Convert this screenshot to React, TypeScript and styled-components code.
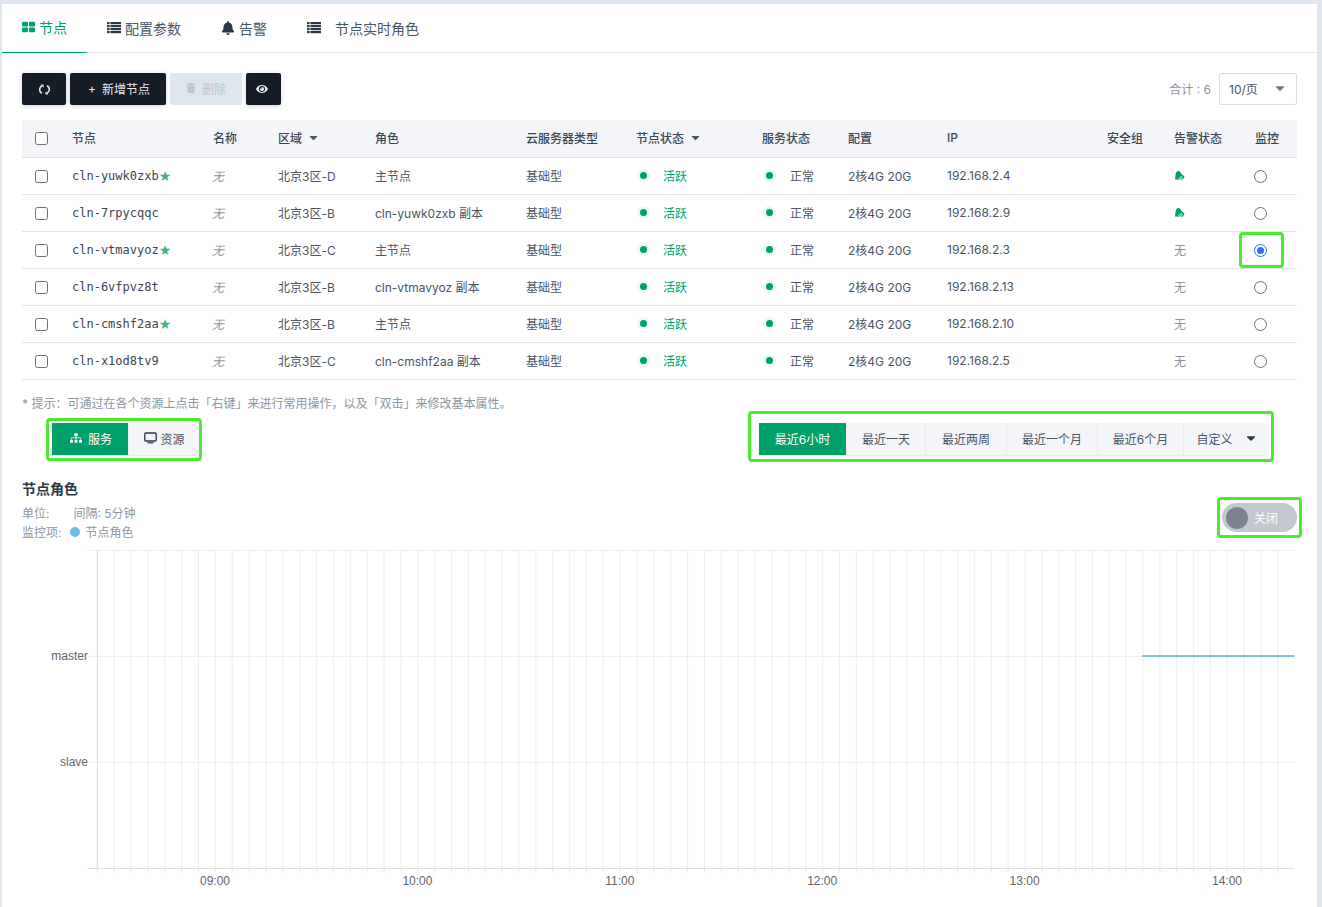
import React from "react";
import styled, { createGlobalStyle } from "styled-components";
import { FaBell, FaEye, FaSitemap, FaTrash, FaCaretDown } from "react-icons/fa";

const GREEN = "#00a06a";
const DARK = "#161d26";

const GlobalStyle = createGlobalStyle`
    html, body {
        margin: 0;
        padding: 0;
        height: 100%;
        background: #dfe6ee;
        overflow: hidden;
    }
    body {
        font-family: Inter, "Noto Sans CJK SC", sans-serif;
        font-size: 12px;
        color: #4a5664;
    }
    * {
        box-sizing: border-box;
    }
`;

const columns = "50px 141px 65px 97px 151px 110px 126px 86px 99px 160px 67px 81px 42px";

const nodes = [
    { id: "cln-yuwk0zxb", star: true, zone: "北京3区-D", role: "主节点", ip: "192.168.2.4", alarm: true, on: false },
    { id: "cln-7rpycqqc", star: false, zone: "北京3区-B", role: "cln-yuwk0zxb 副本", ip: "192.168.2.9", alarm: true, on: false },
    { id: "cln-vtmavyoz", star: true, zone: "北京3区-C", role: "主节点", ip: "192.168.2.3", alarm: false, on: true },
    { id: "cln-6vfpvz8t", star: false, zone: "北京3区-B", role: "cln-vtmavyoz 副本", ip: "192.168.2.13", alarm: false, on: false },
    { id: "cln-cmshf2aa", star: true, zone: "北京3区-B", role: "主节点", ip: "192.168.2.10", alarm: false, on: false },
    { id: "cln-x1od8tv9", star: false, zone: "北京3区-C", role: "cln-cmshf2aa 副本", ip: "192.168.2.5", alarm: false, on: false },
];

const Page = styled.div`
    height: 907px;
    padding: 4px 5px 0 2px;
`;

const Panel = styled.div`
    height: 100%;
    background: #fff;
    overflow: hidden;
`;

const Tabs = styled.div`
    display: flex;
    height: 49px;
    border-bottom: 1px solid #dfe6ee;
`;

const Tab = styled.div<{ $active?: boolean }>`
    display: flex;
    align-items: center;
    gap: 4px;
    height: 49px;
    padding: 0 20px 2px;
    font-size: 14px;
    color: ${(p) => (p.$active ? GREEN : "#4a5664")};
    border-bottom: ${(p) => (p.$active ? `1px solid ${GREEN}` : "none")};
    svg {
        color: ${(p) => (p.$active ? GREEN : "#2c3846")};
    }
`;

const TabGap = styled.span`
    width: 6px;
`;

const Body = styled.div`
    padding: 20px 20px 0;
`;

const Toolbar = styled.div`
    display: flex;
    align-items: center;
    gap: 4px;
    height: 32px;
`;

const ToolButton = styled.button<{ $width: number; $disabled?: boolean }>`
    display: flex;
    align-items: center;
    justify-content: center;
    gap: 6px;
    width: ${(p) => p.$width}px;
    height: 32px;
    padding: 0 0 2px;
    border: none;
    border-radius: 2px;
    font: inherit;
    color: ${(p) => (p.$disabled ? "#bdc6d0" : "#e8ebee")};
    background: ${(p) => (p.$disabled ? "#dfe6ee" : DARK)};
    box-shadow: ${(p) => (p.$disabled ? "none" : "0 1px 4px rgba(22, 29, 38, 0.2)")};
`;

const AddButton = styled(ToolButton)`
    padding: 0 0 2px 2px;
`;

const EyeButton = styled(ToolButton)`
    padding: 0 3px 0 0;
`;

const RefreshButton = styled(ToolButton)`
    padding: 0;
`;

const Total = styled.div`
    display: flex;
    align-items: center;
    gap: 8px;
    margin-left: auto;
    color: #8c96a1;
`;

const TotalLabel = styled.span`
    margin-top: -2px;
`;

const PageSize = styled.div`
    display: flex;
    align-items: center;
    justify-content: space-between;
    width: 78px;
    height: 32px;
    padding: 0 9px 2px 9px;
    border: 1px solid #d5dfe8;
    border-radius: 2px;
    color: #4a5664;
    svg {
        color: #6d7783;
    }
`;

const Table = styled.div`
    margin-top: 15px;
`;

const Row = styled.div<{ $head?: boolean }>`
    display: grid;
    grid-template-columns: ${columns};
    align-items: center;
    height: ${(p) => (p.$head ? 38 : 37)}px;
    padding-bottom: ${(p) => (p.$head ? 3 : 2)}px;
    border-bottom: 1px solid #dfe6ee;
    background: ${(p) => (p.$head ? "#f3f5f9" : "#fff")};
    font-weight: ${(p) => (p.$head ? 500 : 400)};
    color: ${(p) => (p.$head ? "#3a4654" : "#4a5664")};
`;

const CheckCell = styled.div`
    display: flex;
    margin-top: 3px;
    padding-left: 13px;
`;

const Check = styled.span`
    width: 13px;
    height: 13px;
    border: 1px solid #6e6e6e;
    border-radius: 2.5px;
    background: #fff;
`;

const HeadCell = styled.div`
    display: flex;
    align-items: center;
    gap: 5px;
    svg {
        color: #4a5664;
    }
`;

const NodeCell = styled.div`
    display: flex;
    align-items: center;
    height: 16px;
    margin-top: 2px;
`;

const NodeId = styled.span`
    font-family: "DejaVu Sans Mono", monospace;
    font-size: 12px;
    color: #3a4654;
`;

const Star = styled.span`
    color: #3fb27f;
    font-size: 14px;
    line-height: 16px;
    font-family: "DejaVu Sans", sans-serif;
`;

const Muted = styled.span`
    color: #8c96a1;
`;

const Empty = styled(Muted)`
    font-style: italic;
    margin-left: -1px;
`;

const Status = styled.div<{ $green?: boolean }>`
    display: flex;
    align-items: center;
    gap: ${(p) => (p.$green ? 16 : 17)}px;
    padding-left: 4px;
    color: ${(p) => (p.$green ? GREEN : "#4a5664")};
    &::before {
        content: "";
        width: 7px;
        height: 7px;
        border-radius: 50%;
        background: ${GREEN};
        box-shadow: 0 0 0 3px rgba(0, 160, 106, 0.08);
    }
`;

const RadioCell = styled.div`
    margin-top: 3px;
`;

const AlarmCell = styled.div`
    display: flex;
    margin-top: 1px;
`;

const Radio = styled.span<{ $on: boolean }>`
    position: relative;
    display: block;
    width: 13px;
    height: 13px;
    margin-left: -1px;
    border-radius: 50%;
    border: 1px solid ${(p) => (p.$on ? "#2f6fed" : "#6e6e6e")};
    background: #fff;
    &::before {
        content: "";
        display: ${(p) => (p.$on ? "block" : "none")};
        position: absolute;
        inset: 2px;
        border-radius: 50%;
        background: #2f6fed;
    }
`;

/* the green marks drawn over the shot */
const Marked = styled.div<{ $inset: string }>`
    position: relative;
    &::after {
        content: "";
        position: absolute;
        inset: ${(p) => p.$inset};
        border: 3px solid #4bea2e;
        border-radius: 4px;
        pointer-events: none;
    }
`;

const MarkedRadio = styled(Marked)`
    width: 13px;
`;

const MarkedSwitch = styled(Marked)`
    margin-top: 23px;
`;

const Tip = styled.div`
    margin-top: 16px;
    line-height: 15px;
    color: #8c96a1;
`;

const Controls = styled.div`
    display: flex;
    justify-content: space-between;
    margin-top: 12px;
    padding: 0 29px 0 30px;
`;

const Segments = styled.div`
    display: flex;
    background: #f3f5f9;
    border-radius: 2px;
    box-shadow: 0 1px 2px rgba(22, 29, 38, 0.12);
`;

const Segment = styled.div<{ $active?: boolean; $width: number; $gap?: number; $shift?: number }>`
    display: flex;
    align-items: center;
    justify-content: center;
    gap: ${(p) => p.$gap ?? 4}px;
    width: ${(p) => p.$width}px;
    height: 32px;
    padding: 0 0 2px ${(p) => p.$shift ?? 0}px;
    color: ${(p) => (p.$active ? "#fff" : "#4a5664")};
    background: ${(p) => (p.$active ? GREEN : "transparent")};
    & + & {
        border-left: 1px solid ${(p) => (p.$active ? GREEN : "#e8ebf0")};
    }
`;

const CustomSegment = styled(Segment)`
    gap: 11px;
    padding-left: 2px;
    svg {
        color: #2c3846;
    }
`;

const ChartHead = styled.div`
    display: flex;
    justify-content: space-between;
    align-items: flex-start;
    margin-top: 25px;
`;

const ChartTitle = styled.div`
    font-size: 14px;
    font-weight: 600;
    line-height: 18px;
    color: #2c3846;
`;

const Meta = styled.div`
    display: flex;
    align-items: center;
    gap: 8px;
    height: 19px;
    color: #8c96a1;
`;

const MetaHead = styled(Meta)`
    margin-top: 5px;
    gap: 24px;
`;

const MetaName = styled.span`
    margin-left: -3px;
`;

const Dot = styled.span`
    width: 10px;
    height: 10px;
    margin-left: 1px;
    border-radius: 50%;
    background: #74b8ec;
`;

const Switch = styled.div`
    display: flex;
    align-items: center;
    gap: 6px;
    width: 75px;
    height: 29px;
    padding-left: 4px;
    border-radius: 15px;
    background: #c2c8ce;
    color: #fff;
`;

const Knob = styled.span`
    width: 22px;
    height: 22px;
    border-radius: 50%;
    background: #7b838e;
`;

const ChartSvg = styled.svg`
    display: block;
    margin-top: 9px;
    font-family: "Liberation Sans", sans-serif;
    font-size: 12px;
`;

const NodesIcon = () => (
    <svg width="13" height="12" viewBox="0 0 13.4 12" fill="currentColor">
        <rect x="0" y="0.5" width="6.2" height="5" rx="1" />
        <rect x="7.2" y="0.5" width="6.2" height="5" rx="1" />
        <rect x="0" y="6.5" width="6.2" height="5" rx="1" />
        <rect x="7.2" y="6.5" width="6.2" height="5" rx="1" />
    </svg>
);

const ListIcon = () => (
    <svg width="14" height="12" viewBox="0 0 14 12" fill="currentColor">
        {[0, 3, 6, 9].map((y) => (
            <React.Fragment key={y}>
                <rect x="0" y={y} width="2.6" height="2.2" />
                <rect x="3.4" y={y} width="10.6" height="2.2" />
            </React.Fragment>
        ))}
    </svg>
);

const RefreshIcon = () => (
    <svg width="11" height="11" viewBox="0 0 11 11" fill="none" stroke="currentColor" strokeWidth="1.5">
        <path d="M3 9.2A4 4 0 0 1 3 1.9" />
        <path d="M8 1.8A4 4 0 0 1 8 9.1" />
        <path d="M1.9 1.2H4V3.3" strokeWidth="1.2" />
        <path d="M9.1 9.8H7V7.7" strokeWidth="1.2" />
    </svg>
);

const MonitorIcon = () => (
    <svg width="13" height="12" viewBox="0 0 13 12" fill="none" stroke="#2c3846">
        <rect x="0.8" y="1" width="11.4" height="8" rx="1" strokeWidth="1.3" />
        <path d="M3.5 10.8h6" strokeWidth="1.2" />
    </svg>
);

const AlarmIcon = () => (
    <svg width="11" height="11" viewBox="0 0 11 11">
        <path d="M1 9.6 1.6 4.2C1.9 2 3.4 0.8 4.6 0.9 6 1 6.6 2.2 7 3.6L10.6 6.8 8.6 9.8Z" fill={GREEN} />
        <path d="M4.4 8.8 8 6.2M5.4 10 8.6 8" stroke="#fff" strokeWidth="0.9" />
    </svg>
);

// 1322 wide page, the panel content starts at x=22
const hourStep = 202.4 / 12;
const xTicks = Array.from({ length: 72 }, (_, i) => 75.3 + i * hourStep).filter((x) => x <= 1272.5);
const timeLabels = ["09:00", "10:00", "11:00", "12:00", "13:00", "14:00"];

const Chart = () => (
    <ChartSvg width="1275" height="345" viewBox="0 0 1275 345">
        {xTicks.map((x) => (
            <line key={x} x1={x} x2={x} y1={0.5} y2={323} stroke="#eeeeee" />
        ))}
        {[0.5, 106.5, 212.5].map((y) => (
            <line key={y} x1={65} x2={1272.5} y1={y} y2={y} stroke="#eeeeee" />
        ))}
        <line x1={75.3} x2={75.3} y1={0.5} y2={318} stroke="#e0e0e0" />
        <line x1={65} x2={1272.5} y1={318.5} y2={318.5} stroke="#e0e0e0" />
        <line x1={1120} x2={1272.5} y1={106} y2={106} stroke="#7dbfe5" strokeWidth="2" />
        <text x="66" y="110" textAnchor="end" fill="#666">master</text>
        <text x="66" y="216" textAnchor="end" fill="#666">slave</text>
        {timeLabels.map((t, i) => (
            <text key={t} x={193 + i * 202.4} y="335" textAnchor="middle" fill="#666">{t}</text>
        ))}
    </ChartSvg>
);

export default function App() {
    return (
        <>
            <GlobalStyle />
            <Page>
                <Panel>
                    <Tabs>
                        <Tab $active><NodesIcon />节点</Tab>
                        <Tab><ListIcon />配置参数</Tab>
                        <Tab><FaBell size={14} />告警</Tab>
                        <Tab><ListIcon /><TabGap />节点实时角色</Tab>
                    </Tabs>
                    <Body>
                        <Toolbar>
                            <RefreshButton $width={44}><RefreshIcon /></RefreshButton>
                            <AddButton $width={96}><span>+</span><span>新增节点</span></AddButton>
                            <ToolButton $width={72} $disabled><FaTrash size={10} />删除</ToolButton>
                            <EyeButton $width={35}><FaEye size={12} /></EyeButton>
                            <Total>
                                <TotalLabel>合计 : 6</TotalLabel>
                                <PageSize>10/页<FaCaretDown size={14} /></PageSize>
                            </Total>
                        </Toolbar>
                        <Table>
                            <Row $head>
                                <CheckCell><Check /></CheckCell>
                                <HeadCell>节点</HeadCell>
                                <HeadCell>名称</HeadCell>
                                <HeadCell>区域<FaCaretDown size={13} /></HeadCell>
                                <HeadCell>角色</HeadCell>
                                <HeadCell>云服务器类型</HeadCell>
                                <HeadCell>节点状态<FaCaretDown size={13} /></HeadCell>
                                <HeadCell>服务状态</HeadCell>
                                <HeadCell>配置</HeadCell>
                                <HeadCell>IP</HeadCell>
                                <HeadCell>安全组</HeadCell>
                                <HeadCell>告警状态</HeadCell>
                                <HeadCell>监控</HeadCell>
                            </Row>
                            {nodes.map((n) => (
                                <Row key={n.id}>
                                    <CheckCell><Check /></CheckCell>
                                    <NodeCell>
                                        <NodeId>{n.id}</NodeId>
                                        {n.star && <Star>★</Star>}
                                    </NodeCell>
                                    <div><Empty>无</Empty></div>
                                    <div>{n.zone}</div>
                                    <div>{n.role}</div>
                                    <div>基础型</div>
                                    <Status $green>活跃</Status>
                                    <Status>正常</Status>
                                    <div>2核4G 20G</div>
                                    <div>{n.ip}</div>
                                    <div />
                                    <AlarmCell>{n.alarm ? <AlarmIcon /> : <Muted>无</Muted>}</AlarmCell>
                                    <RadioCell>
                                        {n.on ? (
                                            <MarkedRadio $inset="-12px -16px -11px -16px">
                                                <Radio $on />
                                            </MarkedRadio>
                                        ) : (
                                            <Radio $on={false} />
                                        )}
                                    </RadioCell>
                                </Row>
                            ))}
                        </Table>
                        <Tip>* 提示：可通过在各个资源上点击「右键」来进行常用操作，以及「双击」来修改基本属性。</Tip>
                        <Controls>
                            <Marked $inset="-5px -2px -6px -6px">
                                <Segments>
                                    <Segment $active $width={76} $gap={6} $shift={2}><FaSitemap size={12} />服务</Segment>
                                    <Segment $width={72} $gap={3}><MonitorIcon />资源</Segment>
                                </Segments>
                            </Marked>
                            <Marked $inset="-12px -6px -7px -11px">
                                <Segments>
                                    <Segment $active $width={87}>最近6小时</Segment>
                                    <Segment $width={79}>最近一天</Segment>
                                    <Segment $width={81}>最近两周</Segment>
                                    <Segment $width={91}>最近一个月</Segment>
                                    <Segment $width={86}>最近6个月</Segment>
                                    <CustomSegment $width={85}>自定义<FaCaretDown size={14} /></CustomSegment>
                                </Segments>
                            </Marked>
                        </Controls>
                        <ChartHead>
                            <div>
                                <ChartTitle>节点角色</ChartTitle>
                                <MetaHead><span>单位:</span><span>间隔: 5分钟</span></MetaHead>
                                <Meta><span>监控项:</span><Dot /><MetaName>节点角色</MetaName></Meta>
                            </div>
                            <MarkedSwitch $inset="-6px -5px -6px -5px">
                                <Switch><Knob />关闭</Switch>
                            </MarkedSwitch>
                        </ChartHead>
                        <Chart />
                    </Body>
                </Panel>
            </Page>
        </>
    );
}
